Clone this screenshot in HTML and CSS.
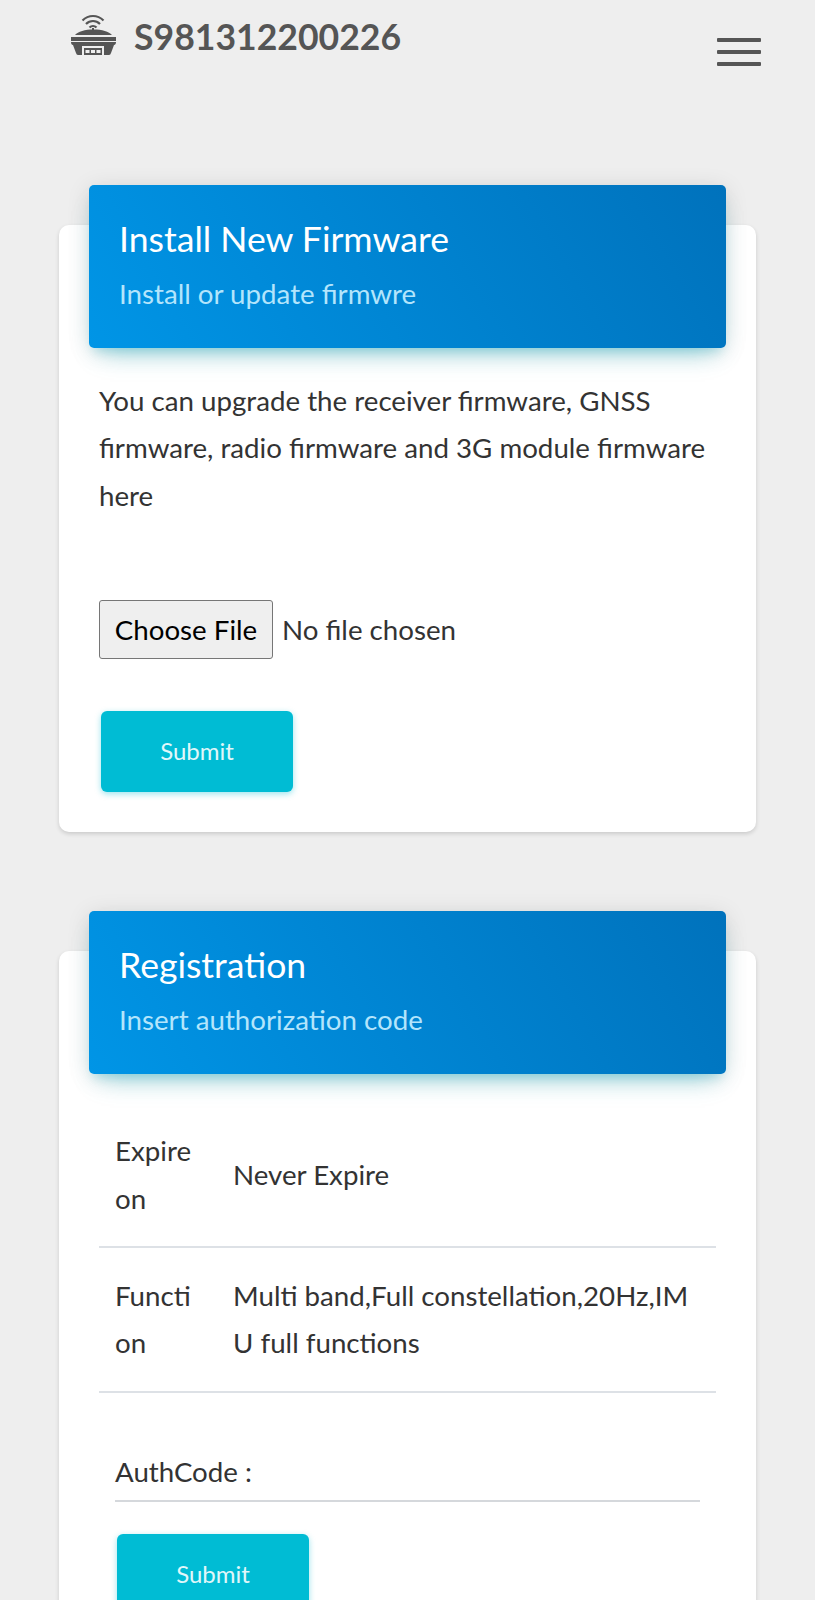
FILE: index.html
```html
<!DOCTYPE html>
<html lang="en">
<head>
<meta charset="utf-8">
<title>S981312200226</title>
<link rel="stylesheet" href="styles.css">
</head>
<body>
<div class="page">
  <header class="topbar">
    <div class="brand">
      <svg class="brand-icon" viewBox="0 0 45 41" aria-hidden="true">
        <g fill="none" stroke="#555" stroke-width="2.200">
          <path d="M11.500 6.500C17.500 .5 26.500 .5 32.500 6.500"/>
          <path d="M15 10C19 6 25 6 29 10"/>
          <path d="M18.500 13.500C20.500 11.500 23.500 11.500 25.500 13.500"/>
        </g>
        <path fill="#555" d="M21 14h2v2h-2zM4 21C7 17.500 14 15.500 22.500 15.500S38 17.500 41 21zM0 23h45v4H0zM0 28h45c0 1.500-.500 3-2 3l-3 8q-.5 2-2 2H7q-1.500 0-2-2L2 31C.5 31 0 29.500 0 28z"/>
        <path fill="#eee" d="M11 32h22v9H11z"/>
        <path fill="#555" d="M13 34h18v7H13z"/>
        <path fill="#eee" d="M14.500 36h4v3h-4zM20 36h4v3h-4zM25.500 36h4v3h-4z"/>
      </svg>
      <span class="brand-name">S981312200226</span>
    </div>
    <button class="menu" type="button" aria-label="Menu"><span></span><span></span><span></span></button>
  </header>
  <main class="content">
    <section class="card">
      <div class="card-head">
        <h2>Install New Firmware</h2>
        <p>Install or update firmwre</p>
      </div>
      <div class="card-body">
        <p class="lead">You can upgrade the receiver firmware, GNSS firmware, radio firmware and 3G module firmware here</p>
        <div class="file-row"><span class="file-btn">Choose File</span><span>No file chosen</span></div>
        <button class="submit" type="button">Submit</button>
      </div>
    </section>
    <section class="card">
      <div class="card-head">
        <h2>Registration</h2>
        <p>Insert authorization code</p>
      </div>
      <div class="card-body">
        <table class="info">
          <tr><td class="key">Expire on</td><td>Never Expire</td></tr>
          <tr><td class="key">Function</td><td>Multi band,Full constellation,20Hz,IMU full functions</td></tr>
        </table>
        <div class="auth">
          <div class="auth-field">AuthCode :</div>
          <button class="submit" type="button">Submit</button>
        </div>
      </div>
    </section>
  </main>
</div>
</body>
</html>
```
FILE: styles.css
```css
* { box-sizing: border-box; }
html, body { margin: 0; padding: 0; }
body { background: #eee; font-family: Lato, "Noto Sans", sans-serif; color: #333; font-size: 27.7px; }
.page { height: 1600px; overflow: hidden; }
.topbar { display: flex; justify-content: space-between; align-items: flex-start; padding: 14px 54px 0 71px; height: 185px; }
.brand { display: flex; align-items: flex-start; gap: 18px; }
.brand-icon { width: 45px; height: 41px; display: block; }
.brand-name { font-size: 35.6px; font-weight: 700; color: #555; line-height: 46px; }
.menu { display: flex; flex-direction: column; gap: 8px; width: 44px; padding: 0; margin-top: 24px; border: 0; background: none; }
.menu span { display: block; height: 4px; background: #555; border-radius: 1px; }
.content { padding: 0 59px; }
.card { background: #fff; border-radius: 10px; box-shadow: 0 2px 4px rgba(0,0,0,.15); margin-top: 40px; margin-bottom: 119px; padding: 0 40px; }
.card-head { margin: 0 -10px -40px; position: relative; top: -40px; height: 163px; padding: 30px 30px 0; border-radius: 5px; color: #fff; background: linear-gradient(60deg, #0095e6, #0072bc); box-shadow: 0 14px 26px -12px rgba(0,172,193,.42), 0 4px 23px 0 rgba(0,0,0,.12), 0 8px 10px -5px rgba(0,172,193,.2); }
.card-head h2 { margin: 0; font-size: 35.6px; font-weight: 400; line-height: 48px; }
.card-head p { margin: 11px 0 0; line-height: 40px; color: #b3e5fc; }
.card-body { padding: 29px 0 40px; }
.lead { margin: 0; line-height: 47.400px; }
.file-row { display: flex; align-items: center; gap: 9px; margin-top: 81px; height: 59px; }
.file-btn { display: flex; align-items: center; justify-content: center; width: 174px; height: 59px; border: 1px solid #767676; border-radius: 3px; background: #efefef; color: #000; }
.submit { display: block; width: 192px; height: 81px; margin: 52px 0 0 2px; padding: 0 0 2px; border: 0; border-radius: 6px; background: #00bcd4; color: #e0f7fa; font: 400 24px Lato, "Noto Sans", sans-serif; box-shadow: 0 2px 6px rgba(0,188,212,.4); }
.info { width: 100%; border-collapse: collapse; }
.info td { padding: 24px 16px; line-height: 47.400px; vertical-align: middle; word-break: break-all; border-bottom: 2px solid #dde1e6; }
.info .key { width: 118px; }
.auth { padding: 0 16px; }
.auth-field { margin-top: 48px; height: 61px; line-height: 61px; border-bottom: 2px solid #d5d8dc; }
.auth .submit { margin: 32px 0 0 2px; }
```
